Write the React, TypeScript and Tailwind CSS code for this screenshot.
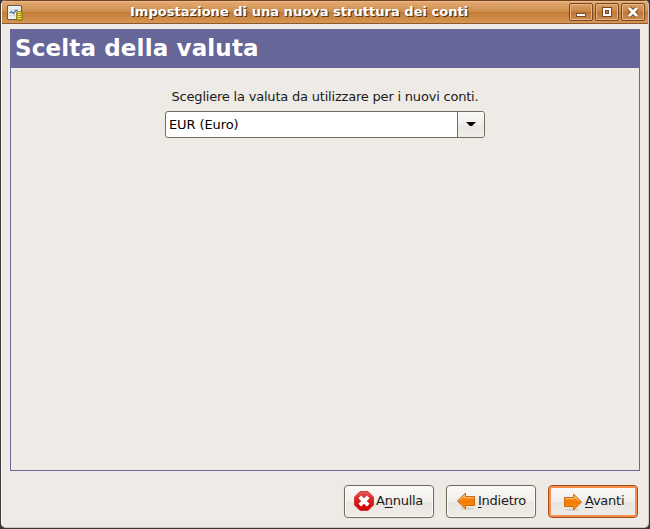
import React from 'react';

const buttonBase =
  'flex h-[33px] w-[90px] items-center rounded-[4px] border border-[#756b5f] bg-[linear-gradient(#faf9f7_0%,#f1efeb_50%,#e9e5e0_51%,#f0ede9_100%)] text-[13px] leading-[16px] tracking-[-0.25px] text-[#1a1a1a] shadow-[inset_0_0_0_1px_#fbfaf8,0_0_0_1px_#e8e4df]';

function CaptionButton({ children, label }: { children: React.ReactNode; label: string }) {
  return (
    <button
      aria-label={label}
      className="flex h-[18px] w-6 items-center justify-center rounded-[2px] border border-[#764a24] bg-[linear-gradient(#dca069_0%,#cb8748_45%,#bd7535_50%,#cf8c4d_100%)] shadow-[inset_0_0_0_1px_#e5b587]"
    >
      {children}
    </button>
  );
}

function AppIcon() {
  return (
    <svg width="18" height="18" viewBox="0 0 18 18">
      <rect x=".5" y="2.5" width="14" height="14" rx="1.2" fill="#f5f5f1" stroke="#5b5d58" strokeWidth="1.2" />
      <path d="M2 6.5H13M2 9.5H13M2 12.5H13M4.5 4V15M7.5 4V15M10.5 4V15" stroke="#d3d5d1" strokeWidth=".7" />
      <path d="M2.5 10L4.5 8.5L6.5 10.5L8.5 7.5H10.5" fill="none" stroke="#426da5" strokeWidth="1.3" />
      <rect x="9.5" y="8.5" width="6" height="9" rx="1.5" fill="#d7bd28" stroke="#81700d" strokeWidth=".8" />
      <path d="M10 10.5H15M10 12.5H15M10 14.5H15M10 16.5H15" stroke="#a18b1b" strokeWidth=".8" />
      <path d="M11 9.5H13M11 11.5H13M11 13.5H13M11 15.5H13" stroke="#f7e878" strokeWidth=".8" />
    </svg>
  );
}

function CancelIcon() {
  return (
    <svg width="20" height="20" viewBox="0 0 20 20" className="mb-px">
      <defs>
        <linearGradient id="cancel" x2="0" y2="1">
          <stop stopColor="#e75853" />
          <stop offset=".45" stopColor="#d72020" />
          <stop offset="1" stopColor="#d30000" />
        </linearGradient>
      </defs>
      <path d="M6 .5H14L19.5 6V14L14 19.5H6L.5 14V6Z" fill="url(#cancel)" stroke="#cc2828" strokeWidth=".8" />
      <path d="M5.8 5.8L14.2 14.2M14.2 5.8L5.8 14.2" stroke="#fff" strokeWidth="3.8" />
    </svg>
  );
}

function ArrowIcon({ right = false }: { right?: boolean }) {
  return (
    <svg width="20" height="20" viewBox="0 0 20 20" className={right ? '-scale-x-100 mt-px' : 'mb-px'}>
      <defs>
        <linearGradient id="arrow" x2="0" y2="1">
          <stop stopColor="#ffb35b" />
          <stop offset=".5" stopColor="#f57900" />
          <stop offset="1" stopColor="#ff9415" />
        </linearGradient>
      </defs>
      <ellipse cx="11" cy="17.6" rx="7" ry="1.3" fill="#d8d1c7" />
      <path d="M1.5 10L9.5 2V5.5H18.5V14.5H9.5V18Z" fill="url(#arrow)" stroke="#c96a18" strokeLinejoin="round" />
      <path d="M3.5 9.5L8.5 4.5V6.5H17.5" fill="none" stroke="#ffc27b" strokeWidth=".8" />
    </svg>
  );
}

export default function App() {
  return (
    <div className="h-[529px] w-[650px] overflow-hidden bg-[#3c3937] px-px pb-px font-['DejaVu_Sans',sans-serif]">
      <main className="flex h-[528px] flex-col overflow-hidden rounded-[5px] border-x border-b border-b-[#cbc7c1] border-l-[#faf8f6] border-r-[#cbc7c1] bg-[#eeebe6]">
        <header className="-mx-px flex h-6 shrink-0 items-center border-y border-b-[#885a2d] border-t-[#704726] bg-[linear-gradient(#e6a96f_0%,#dba066_20%,#cf8c4b_49%,#c37b38_51%,#d89651_100%)] pl-[6px] pr-1 shadow-[inset_0_1px_#efb781]">
          <AppIcon />
          <h1 className="flex-1 whitespace-nowrap pl-[105px] text-[13px] font-bold leading-4 tracking-[0.03px] text-white [text-shadow:1px_1px_0_#4c3420]">
            Impostazione di una nuova struttura dei conti
          </h1>
          <div className="flex gap-[2px]">
            <CaptionButton label="Riduci">
              <svg width="14" height="14" viewBox="0 0 14 14">
                <path d="M2 8H12V12H2Z" fill="#764a24" /><path d="M3 9H11V11H3Z" fill="#fff" />
              </svg>
            </CaptionButton>
            <CaptionButton label="Ingrandisci">
              <svg width="14" height="14" viewBox="0 0 14 14">
                <path fillRule="evenodd" d="M2 2H12V12H2ZM6 6V8H8V6Z" fill="#764a24" />
                <path fillRule="evenodd" d="M3 3H11V11H3ZM5 5V9H9V5Z" fill="#fff" />
              </svg>
            </CaptionButton>
            <CaptionButton label="Chiudi">
              <svg width="14" height="14" viewBox="0 0 14 14">
                <path d="M3 3L11 11M11 3L3 11" stroke="#764a24" strokeWidth="4.6" />
                <path d="M3 3L11 11M11 3L3 11" stroke="#fff" strokeWidth="2.8" />
              </svg>
            </CaptionButton>
          </div>
        </header>
        <section className="ml-2 mt-[5px] flex h-[442px] w-[630px] shrink-0 flex-col border border-[#666699]">
          <h2 className="h-[38px] shrink-0 whitespace-nowrap bg-[#666699] pl-1 pt-[3px] text-[23px] font-bold leading-[30px] tracking-[0.15px] text-white">
            Scelta della valuta
          </h2>
          <div className="flex flex-col items-center pt-[21px]">
            <p className="whitespace-nowrap text-[13px] leading-4 tracking-[-0.2px] text-[#1a1a1a]">
              Scegliere la valuta da utilizzare per i nuovi conti.
            </p>
            <div className="mt-[6px] flex h-[27px] w-80 overflow-hidden rounded-[3px] border border-[#756b5f] bg-white text-[13px] leading-[25px] tracking-[-0.1px] text-black">
              <span className="flex-1 pl-[3px]">EUR (Euro)</span>
              <button aria-label="Scegli valuta" className="flex w-[27px] items-center justify-center border-l border-[#756b5f] bg-[linear-gradient(#faf9f7_0%,#f1efeb_50%,#e9e5e0_51%,#f0ede9_100%)]">
                <svg width="10" height="5" viewBox="0 0 10 5"><path d="M0 0H10L6 4H4Z" fill="#000" /></svg>
              </button>
            </div>
          </div>
        </section>
        <footer className="mr-[10px] mt-[14px] flex justify-end gap-3">
          <button className={buttonBase + ' gap-[2px] pl-[9px]'}>
            <CancelIcon /><span className="pb-[2px]">A<u className="underline-offset-2">n</u>nulla</span>
          </button>
          <button className={buttonBase + ' gap-[2px] pl-[9px]'}>
            <ArrowIcon /><span className="pb-[2px]"><u className="underline-offset-2">I</u>ndietro</span>
          </button>
          <button className="flex h-[33px] w-[90px] items-center gap-[2px] rounded-[4px] border border-[#a94e1b] bg-[linear-gradient(#faf9f7_0%,#f1efeb_50%,#e9e5e0_51%,#f0ede9_100%)] pl-[14px] text-[13px] leading-4 tracking-[-0.25px] text-[#1a1a1a] shadow-[inset_0_0_0_2px_#f98d4b]">
            <ArrowIcon right /><span className="pb-[2px]"><u className="underline-offset-2">A</u>vanti</span>
          </button>
        </footer>
      </main>
    </div>
  );
}
